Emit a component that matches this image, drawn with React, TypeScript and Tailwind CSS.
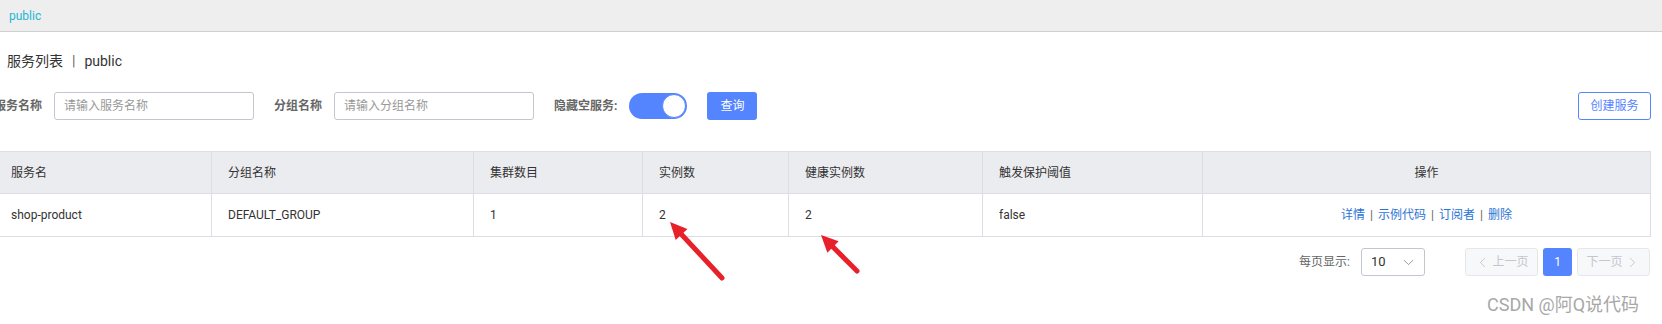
import { ChevronDown, ChevronLeft, ChevronRight } from "lucide-react";

const FONT = { fontFamily: 'Roboto, "Noto Sans CJK SC", sans-serif' };

// ── Columns ───────────────────────────────────────────────
const COLUMNS = [
  { key: "name", label: "服务名", w: "w-[217px]" },
  { key: "group", label: "分组名称", w: "w-[262px]" },
  { key: "cluster", label: "集群数目", w: "w-[169px]" },
  { key: "ips", label: "实例数", w: "w-[146px]" },
  { key: "healthy", label: "健康实例数", w: "w-[194px]" },
  { key: "threshold", label: "触发保护阈值", w: "w-[220px]" },
];

const ROW = {
  name: "shop-product",
  group: "DEFAULT_GROUP",
  cluster: "1",
  ips: "2",
  healthy: "2",
  threshold: "false",
} as Record<string, string>;

const ACTIONS = ["详情", "示例代码", "订阅者", "删除"];

const Field = ({ label, placeholder }: { label: string; placeholder: string }) => (
  <div className="flex items-center gap-[12px]">
    <span className="w-[48px] text-[12px] font-bold text-[#666] whitespace-nowrap">{label}</span>
    <div className="w-[200px] h-[28px] border border-[#c4c6cf] rounded-[3px] flex items-center pl-[9px] text-[12px] text-[#999]">
      {placeholder}
    </div>
  </div>
);

const Arrow = ({ x1, y1, x2, y2 }: { x1: number; y1: number; x2: number; y2: number }) => {
  const ang = Math.atan2(y2 - y1, x2 - x1);
  const L = 17;
  const W = 8;
  const bx = x2 - L * Math.cos(ang);
  const by = y2 - L * Math.sin(ang);
  const px = -Math.sin(ang) * W;
  const py = Math.cos(ang) * W;
  return (
    <g>
      <line x1={x1} y1={y1} x2={bx} y2={by} stroke="#e8202a" strokeWidth={5} strokeLinecap="round" />
      <polygon points={`${x2},${y2} ${bx + px},${by + py} ${bx - px},${by - py}`} fill="#e8202a" />
    </g>
  );
};

export default function App() {
  return (
    <div className="relative w-[1662px] h-[324px] overflow-hidden bg-white text-[#333]" style={FONT}>
      {/* breadcrumb bar */}
      <div className="h-[32px] bg-[#eeeeee] border-b border-[#cfcfcf] flex items-center pl-[9px] text-[12px] text-[#1eb6d6]">
        public
      </div>

      {/* title */}
      <div className="mt-[19px] pl-[7px] h-[20px] flex items-center text-[14px] text-[#333]">
        <span>服务列表</span>
        <span className="mx-[9px] text-[#666]">|</span>
        <span>public</span>
      </div>

      {/* search form */}
      <div className="mt-[21px] ml-[-6px] mr-[11px] flex items-center h-[28px]">
        <div className="flex items-center gap-[20px]">
          <Field label="服务名称" placeholder="请输入服务名称" />
          <Field label="分组名称" placeholder="请输入分组名称" />
          <div className="flex items-center gap-[12px]">
            <span className="text-[12px] font-bold text-[#666] whitespace-nowrap">隐藏空服务:</span>
            <div className="w-[58px] h-[26px] rounded-full bg-[#5584ff] flex items-center justify-end pr-[1px]">
              <div className="w-[24px] h-[24px] rounded-full bg-white border border-[#5584ff]" />
            </div>
          </div>
          <button className="w-[50px] h-[28px] rounded-[3px] bg-[#5584ff] text-white text-[12px]">查询</button>
        </div>
        <button className="ml-auto w-[73px] h-[28px] rounded-[3px] border border-[#5584ff] text-[#5584ff] text-[12px] bg-white">
          创建服务
        </button>
      </div>

      {/* table */}
      <div className="mt-[31px] ml-[-6px] mr-[11px]">
        <table className="w-full border-collapse table-fixed text-[12px]">
          <thead>
            <tr className="bg-[#ebecf0]">
              {COLUMNS.map((c) => (
                <th
                  key={c.key}
                  className={`${c.w} h-[42px] border border-[#dcdee3] px-[16px] text-left font-normal text-[#333]`}
                >
                  {c.label}
                </th>
              ))}
              <th className="h-[42px] border border-[#dcdee3] text-center font-normal text-[#333]">操作</th>
            </tr>
          </thead>
          <tbody>
            <tr>
              {COLUMNS.map((c) => (
                <td key={c.key} className="h-[43px] border border-[#dcdee3] px-[16px] text-[#333]">
                  {ROW[c.key]}
                </td>
              ))}
              <td className="h-[43px] border border-[#dcdee3] text-center">
                {ACTIONS.map((a, i) => (
                  <span key={a}>
                    <span className="text-[#2a73d6]">{a}</span>
                    {i < ACTIONS.length - 1 && <span className="mx-[5px] text-[#666]">|</span>}
                  </span>
                ))}
              </td>
            </tr>
          </tbody>
        </table>
      </div>

      {/* pagination */}
      <div className="mt-[11px] mr-[12px] flex items-center justify-end h-[28px] text-[12px]">
        <span className="text-[#666] mr-[11px]">每页显示:</span>
        <div className="w-[64px] h-[28px] border border-[#c4c6cf] rounded-[3px] flex items-center justify-between pl-[9px] pr-[7px] text-[13px] text-[#333]">
          <span>10</span>
          <ChevronDown size={17} strokeWidth={1.2} className="text-[#888]" />
        </div>
        <div className="ml-[40px] flex items-center gap-[5px]">
          <div className="w-[73px] h-[28px] border border-[#e6e7eb] bg-[#f7f8fa] rounded-[3px] flex items-center justify-center gap-[1px] text-[#c4c6cf]">
            <ChevronLeft size={17} strokeWidth={1.3} />
            <span>上一页</span>
          </div>
          <div className="w-[29px] h-[28px] rounded-[3px] bg-[#5584ff] text-white flex items-center justify-center">1</div>
          <div className="w-[73px] h-[28px] border border-[#e6e7eb] bg-[#f7f8fa] rounded-[3px] flex items-center justify-center gap-[1px] text-[#c4c6cf]">
            <span>下一页</span>
            <ChevronRight size={17} strokeWidth={1.3} />
          </div>
        </div>
      </div>

      {/* annotation arrows */}
      <svg className="absolute left-0 top-0 pointer-events-none" width={1662} height={324}>
        <Arrow x1={722} y1={278} x2={670} y2={222} />
        <Arrow x1={857} y1={271} x2={821} y2={235} />
      </svg>

      {/* watermark */}
      <div className="absolute left-[1487px] top-[293px] text-[18px] leading-[24px] text-[#a8a8a8] whitespace-nowrap">
        CSDN @阿Q说代码
      </div>
    </div>
  );
}
